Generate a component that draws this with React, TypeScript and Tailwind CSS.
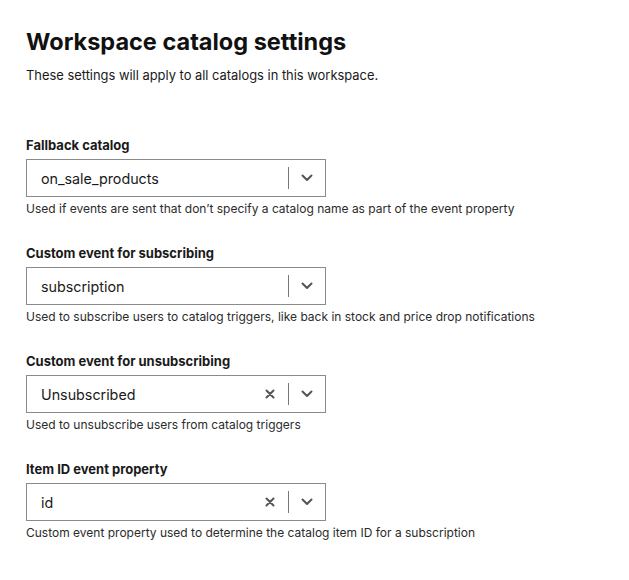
const fields = [
  {
    label: "Fallback catalog",
    value: "on_sale_products",
    clearable: false,
    help: "Used if events are sent that don\u2019t specify a catalog name as part of the event property",
  },
  {
    label: "Custom event for subscribing",
    value: "subscription",
    clearable: false,
    help: "Used to subscribe users to catalog triggers, like back in stock and price drop notifications",
  },
  {
    label: "Custom event for unsubscribing",
    value: "Unsubscribed",
    clearable: true,
    help: "Used to unsubscribe users from catalog triggers",
  },
  {
    label: "Item ID event property",
    value: "id",
    clearable: true,
    help: "Custom event property used to determine the catalog item ID for a subscription",
  },
];

const Chevron = () => (
  <svg width="12" height="8" viewBox="0 0 12 8" fill="none">
    <path d="M1.5 1.5 6 6l4.5-4.5" stroke="#555" strokeWidth="2" strokeLinecap="round" strokeLinejoin="round" />
  </svg>
);

const Cross = () => (
  <svg width="10" height="10" viewBox="0 0 10 10" fill="none">
    <path d="M1.5 1.5l7 7M8.5 1.5l-7 7" stroke="#555" strokeWidth="2" strokeLinecap="round" />
  </svg>
);

const SelectField = ({ label, value, clearable, help }: (typeof fields)[number]) => (
  <div className="flex flex-col">
    <label className="text-[13px] font-bold leading-4 text-[#1a1a1a]">{label}</label>
    <div className="mt-[6px] flex h-[38px] w-[300px] items-center border border-[#8a8a8a] bg-white">
      <span className="flex-1 pl-[14px] text-[14.3px] text-[#1a1a1a]">{value}</span>
      {clearable && (
        <span className="flex w-[20px] items-center justify-center">
          <Cross />
        </span>
      )}
      <span className="mx-[8px] h-[22px] w-px bg-[#777]" />
      <span className="flex w-[20px] items-center justify-center">
        <Chevron />
      </span>
      <span className="w-[8px]" />
    </div>
    <p className="mt-[4px] text-[12px] leading-4 text-[#2b2b2b]">{help}</p>
  </div>
);

export default function App() {
  return (
    <div className="min-h-[580px] bg-white px-[26px] pt-[26px] font-['Inter',sans-serif]">
      <h1 className="text-[23.5px] font-bold leading-8 text-[#111]">Workspace catalog settings</h1>
      <p className="mt-[8px] text-[12.9px] text-[#1a1a1a]">These settings will apply to all catalogs in this workspace.</p>
      <div className="mt-[52px] flex flex-col gap-[28px]">
        {fields.map((f) => (
          <SelectField key={f.label} {...f} />
        ))}
      </div>
    </div>
  );
}
